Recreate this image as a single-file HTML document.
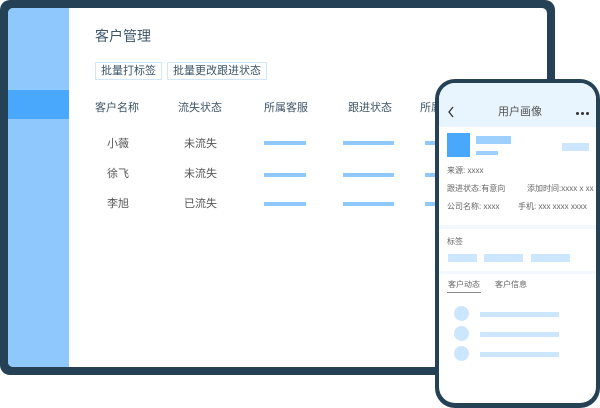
<!DOCTYPE html>
<html><head><meta charset="utf-8"><style>
*{margin:0;padding:0;box-sizing:border-box}
body{width:600px;height:407px;background:#fff;position:relative;overflow:hidden;font-family:"Liberation Sans","Noto Sans CJK SC",sans-serif}
.a{position:absolute}
.tab{left:0;top:0;width:555px;height:375px;background:#254155;border-radius:10px}
.scr{left:8px;top:8px;width:539px;height:359px;background:#fff;border-radius:5px;overflow:hidden}
.side{left:0;top:0;width:61px;height:359px;background:#8ec8fc}
.act{left:0;top:82px;width:61px;height:29px;background:#4aa8fc}
.t{font-size:11px;color:#555;white-space:nowrap;line-height:1}
.h{color:#3e5568}
.btn{border:1px solid #cfe6fb;height:18px;font-size:11px;color:#3e5568;line-height:16px;padding:0 5px;border-radius:1px}
.bar{background:#8ec8fc;height:4px}
.ph{left:435px;top:79px;width:165px;height:329px;background:#254155;border-radius:20px}
.pin{left:4px;top:4px;width:157px;height:320px;background:#fff;border-radius:16px;overflow:hidden}
.lb{background:#cce6fd}
.s{font-size:8px;color:#666;white-space:nowrap;line-height:1}
.dot{width:3px;height:3px;border-radius:50%;background:#333}
</style></head><body>
<div class="a tab"><div class="a scr">
 <div class="a side"></div><div class="a act"></div>
 <div class="a t h" style="left:87px;top:21px;font-size:14px">客户管理</div>
 <div class="a btn" style="left:87px;top:54px">批量打标签</div>
 <div class="a btn" style="left:159px;top:54px">批量更改跟进状态</div>
 <div class="a t h" style="left:87px;top:95px">客户名称</div>
 <div class="a t h" style="left:170px;top:95px">流失状态</div>
 <div class="a t h" style="left:256px;top:95px">所属客服</div>
 <div class="a t h" style="left:340px;top:95px">跟进状态</div>
 <div class="a t h" style="left:412px;top:95px">所属</div>
 <div class="a t" style="left:99px;top:131px">小薇</div><div class="a t" style="left:176px;top:131px">未流失</div>
 <div class="a t" style="left:99px;top:161px">徐飞</div><div class="a t" style="left:176px;top:161px">未流失</div>
 <div class="a t" style="left:99px;top:191px">李旭</div><div class="a t" style="left:176px;top:191px">已流失</div>
 <div class="a bar" style="left:256px;top:133px;width:42px"></div><div class="a bar" style="left:335px;top:133px;width:51px"></div><div class="a bar" style="left:417px;top:133px;width:20px"></div>
 <div class="a bar" style="left:256px;top:165px;width:42px"></div><div class="a bar" style="left:335px;top:165px;width:51px"></div><div class="a bar" style="left:417px;top:165px;width:20px"></div>
 <div class="a bar" style="left:256px;top:194px;width:42px"></div><div class="a bar" style="left:335px;top:194px;width:51px"></div><div class="a bar" style="left:417px;top:194px;width:20px"></div>
</div></div>
<div class="a ph"><div class="a pin">
 <div class="a" style="left:0;top:0;width:157px;height:44px;background:#e8f4fe"></div>
 <svg class="a" style="left:8px;top:23px" width="8" height="12"><path d="M6 1L2 6l4 5" stroke="#333" stroke-width="1.3" fill="none"/></svg>
 <div class="a t" style="left:59px;top:24px;color:#555">用户画像</div>
 <div class="a dot" style="left:137px;top:29px"></div>
 <div class="a dot" style="left:142px;top:29px"></div>
 <div class="a dot" style="left:147px;top:29px"></div>
 <div class="a" style="left:8px;top:50px;width:23px;height:24px;background:#4aa8fc"></div>
 <div class="a" style="left:37px;top:53px;width:35px;height:8px;background:#9dd0fc"></div>
 <div class="a" style="left:37px;top:68px;width:22px;height:4px;background:#9dd0fc"></div>
 <div class="a lb" style="left:123px;top:60px;width:27px;height:8px"></div>
 <div class="a s" style="left:8px;top:84px">来源: xxxx</div>
 <div class="a s" style="left:8px;top:102px">跟进状态:有意向</div>
 <div class="a s" style="left:88px;top:102px">添加时间:xxxx x xx</div>
 <div class="a s" style="left:8px;top:120px">公司名称: xxxx</div>
 <div class="a s" style="left:79px;top:120px">手机: xxx xxxx xxxx</div>
 <div class="a" style="left:0;top:142px;width:157px;height:4px;background:#f2f8fe"></div>
 <div class="a s" style="left:8px;top:155px">标签</div>
 <div class="a lb" style="left:9px;top:171px;width:29px;height:8px"></div>
 <div class="a lb" style="left:45px;top:171px;width:39px;height:8px"></div>
 <div class="a lb" style="left:92px;top:171px;width:39px;height:8px"></div>
 <div class="a" style="left:0;top:188px;width:157px;height:3px;background:#f2f8fe"></div>
 <div class="a s" style="left:9px;top:198px">客户动态</div>
 <div class="a s" style="left:56px;top:198px">客户信息</div>
 <div class="a" style="left:8px;top:209px;width:34px;height:1px;background:#888"></div>
 <div class="a lb" style="left:15px;top:223px;width:15px;height:15px;border-radius:50%"></div>
 <div class="a lb" style="left:41px;top:229px;width:79px;height:5px"></div>
 <div class="a lb" style="left:15px;top:243px;width:15px;height:15px;border-radius:50%"></div>
 <div class="a lb" style="left:41px;top:249px;width:79px;height:5px"></div>
 <div class="a lb" style="left:15px;top:263px;width:15px;height:15px;border-radius:50%"></div>
 <div class="a lb" style="left:41px;top:269px;width:79px;height:5px"></div>
</div></div>
</body></html>
